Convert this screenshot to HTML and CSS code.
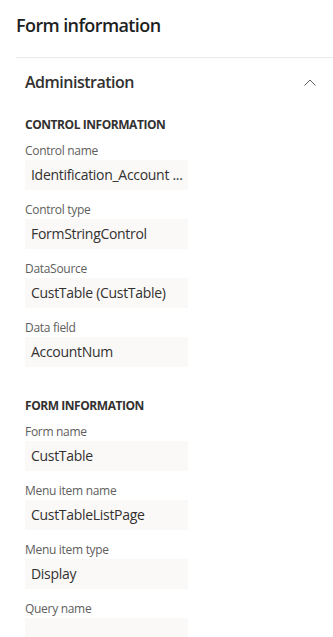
FILE: index.html
```html
<!DOCTYPE html>
<html lang="en">
<head>
<meta charset="utf-8">
<title>Form information</title>
<link rel="stylesheet" href="styles.css">
</head>
<body>
<div class="panel">
  <h1 class="panel-title">Form information</h1>
  <section class="section">
    <div class="section-header">
      <span class="section-name">Administration</span>
      <svg class="chevron" width="12" height="7" viewBox="0 0 12 7" aria-hidden="true">
        <polyline points="0.5,6.5 6,1 11.5,6.5" fill="none" stroke="#605e5c" stroke-width="1"/>
      </svg>
    </div>
    <div class="section-body">
      <div class="group">
        <div class="group-title">CONTROL INFORMATION</div>
        <div class="field"><div class="label">Control name</div><div class="value">Identification_Account ...</div></div>
        <div class="field"><div class="label">Control type</div><div class="value">FormStringControl</div></div>
        <div class="field"><div class="label">DataSource</div><div class="value">CustTable (CustTable)</div></div>
        <div class="field"><div class="label">Data field</div><div class="value">AccountNum</div></div>
      </div>
      <div class="group">
        <div class="group-title">FORM INFORMATION</div>
        <div class="field"><div class="label">Form name</div><div class="value">CustTable</div></div>
        <div class="field"><div class="label">Menu item name</div><div class="value">CustTableListPage</div></div>
        <div class="field"><div class="label">Menu item type</div><div class="value">Display</div></div>
        <div class="field"><div class="label">Query name</div><div class="value"></div></div>
      </div>
    </div>
  </section>
</div>
</body>
</html>
```
FILE: styles.css
```css
html, body {
  margin: 0;
  padding: 0;
  background: #ffffff;
}
body {
  font-family: "Open Sans", "Noto Sans", sans-serif;
  color: #323130;
  overflow: hidden;
}
.panel {
  padding-left: 16px;
}
.panel-title {
  margin: 0;
  padding-top: 11px;
  margin-bottom: 18px;
  font-size: 18px;
  line-height: 28px;
  font-weight: 600;
  letter-spacing: -0.6px;
  color: #201f1e;
}
.section {
  border-top: 1px solid #edebe9;
}
.section-header {
  height: 48px;
  display: flex;
  align-items: center;
  justify-content: space-between;
  padding: 0 17px 0 9px;
}
.section-name {
  font-size: 16px;
  font-weight: 600;
  letter-spacing: -0.5px;
  color: #323130;
}
.chevron {
  display: block;
}
.section-body {
  padding-left: 9px;
}
.group {
  margin-top: 13px;
}
.group + .group {
  margin-top: 33px;
}
.group-title {
  font-size: 12px;
  line-height: 12px;
  font-weight: 700;
  letter-spacing: -0.45px;
  color: #323130;
}
.field {
  margin-top: 12px;
}
.label {
  font-size: 12px;
  line-height: 16px;
  letter-spacing: -0.3px;
  color: #605e5c;
  margin-bottom: 1px;
}
.value {
  width: 163px;
  height: 30px;
  box-sizing: border-box;
  background: #faf9f8;
  padding: 0 6px;
  font-size: 14px;
  line-height: 30px;
  letter-spacing: -0.3px;
  color: #323130;
  white-space: nowrap;
  overflow: hidden;
}
```
